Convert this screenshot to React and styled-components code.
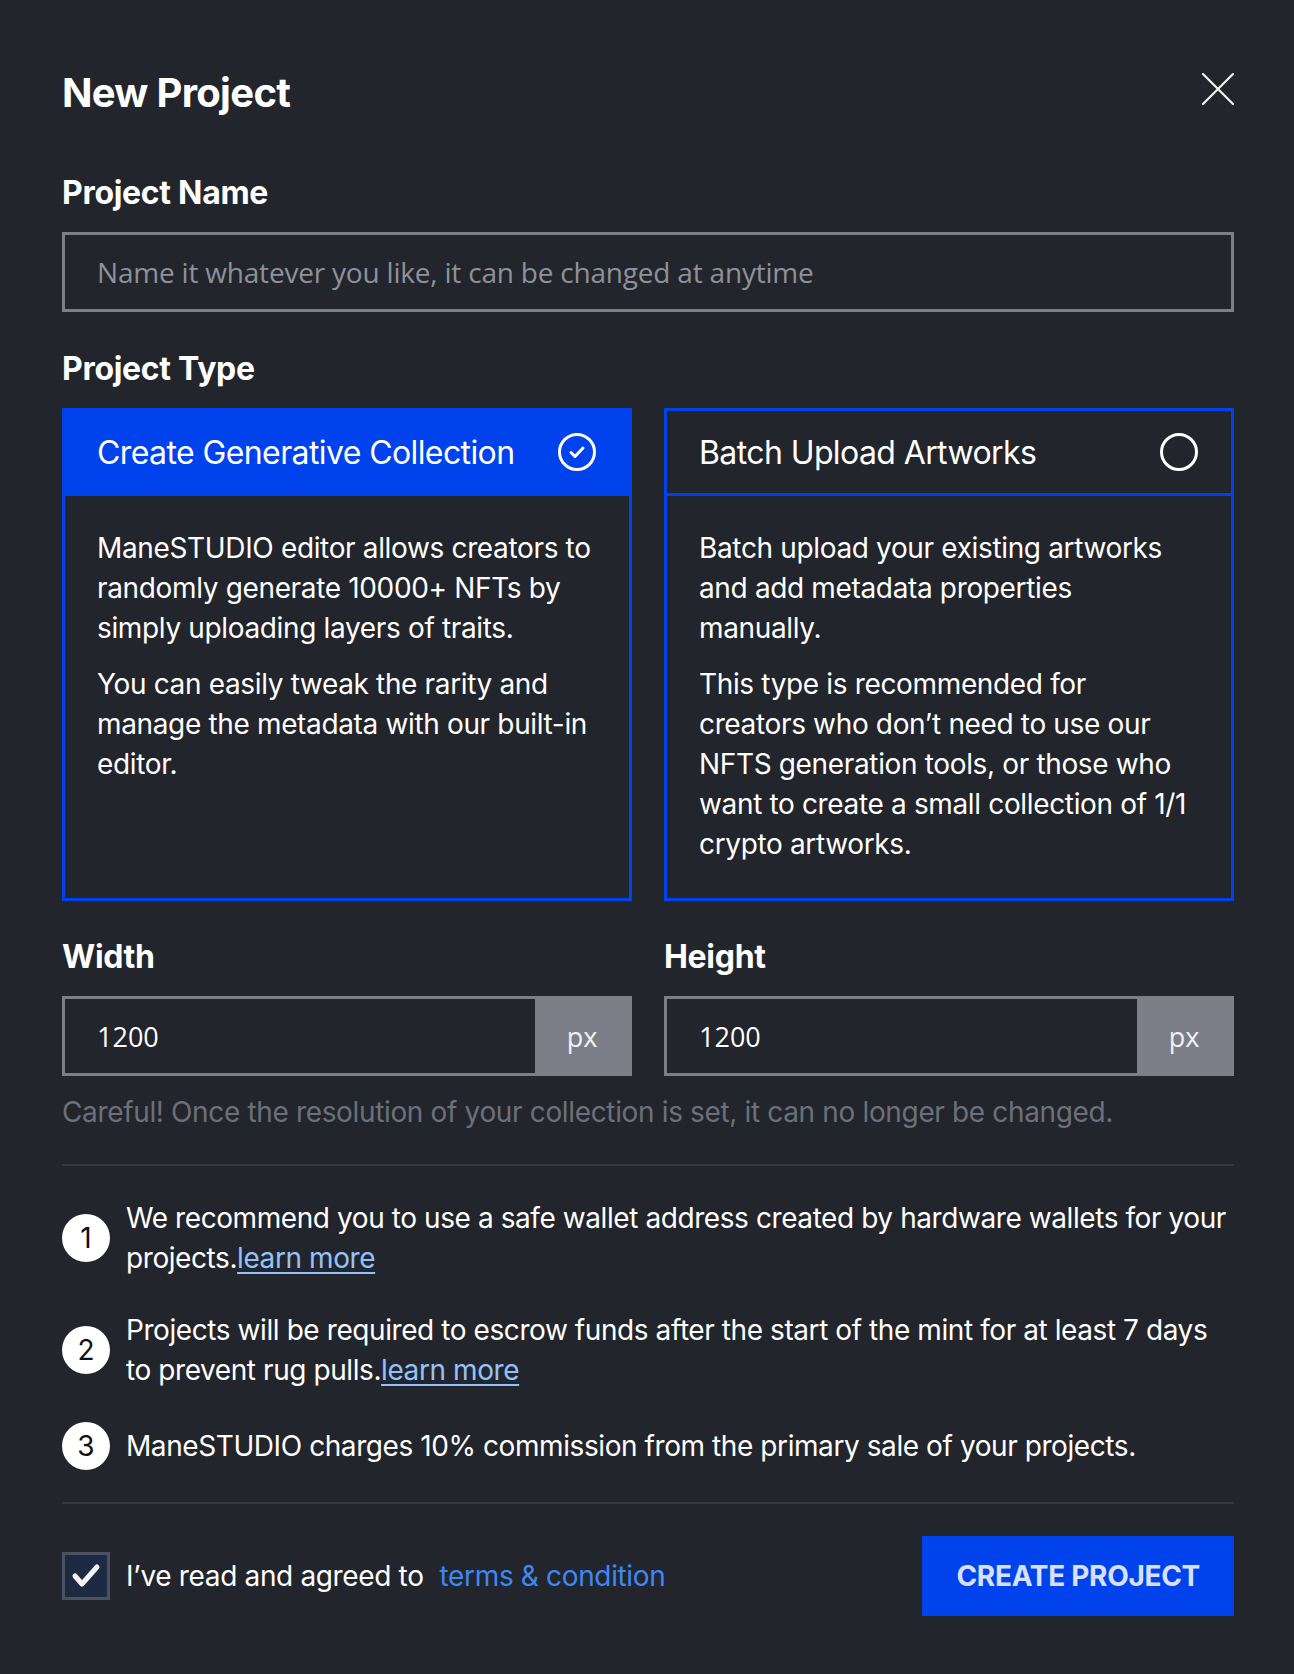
import React, { useState } from 'react'
import styled, { createGlobalStyle } from 'styled-components'

const GlobalStyle = createGlobalStyle`
  body {
    margin: 0;
    background: #22252b;
    font-family: Inter, "Liberation Sans", sans-serif;
    color: #fff;
  }
`

const projectTypes = [
  {
    id: 'generative',
    title: 'Create Generative Collection',
    paragraphs: [
      'ManeSTUDIO editor allows creators to randomly generate 10000+ NFTs by simply uploading layers of traits.',
      'You can easily tweak the rarity and manage the metadata with our built-in editor.'
    ]
  },
  {
    id: 'batch',
    title: 'Batch Upload Artworks',
    paragraphs: [
      'Batch upload your existing artworks and add metadata properties manually.',
      'This type is recommended for creators who don\u2019t need to use our NFTS generation tools, or those who want to create a small collection of 1/1 crypto artworks.'
    ]
  }
]

const notes = [
  { text: 'We recommend you to use a safe wallet address created by hardware wallets for your projects.', link: true },
  { text: 'Projects will be required to escrow funds after the start of the mint for at least 7 days to prevent rug pulls.', link: true },
  { text: 'ManeSTUDIO charges 10% commission from the primary sale of your projects.', link: false }
]

export default function App () {
  const [type, setType] = useState('generative')
  const [agreed, setAgreed] = useState(true)

  return (
    <>
      <GlobalStyle />
      <Modal>
        <Header>
          <Title>New Project</Title>
          <CloseButton aria-label='close'>
            <svg width='32' height='32' viewBox='0 0 32 32' stroke='#f2f2f2' strokeWidth='2.2' strokeLinecap='round'>
              <path d='M1 1L31 31M31 1L1 31' />
            </svg>
          </CloseButton>
        </Header>

        <Label>Project Name</Label>
        <TextInput placeholder='Name it whatever you like, it can be changed at anytime' />

        <Label $top={37}>Project Type</Label>
        <CardGrid>
          {projectTypes.map((t) => {
            const selected = t.id === type
            return (
              <Card key={t.id} onClick={() => setType(t.id)}>
                <CardHeader $selected={selected}>
                  <span>{t.title}</span>
                  <svg width='40' height='40' viewBox='0 0 40 40' fill='none' stroke='#fff' strokeWidth='3'>
                    <circle cx='20' cy='20' r='17.5' />
                    {selected && <path d='M14 20.5l4 4 8-8.5' strokeLinecap='round' strokeLinejoin='round' />}
                  </svg>
                </CardHeader>
                <CardBody>
                  {t.paragraphs.map((p) => <p key={p}>{p}</p>)}
                </CardBody>
              </Card>
            )
          })}
        </CardGrid>

        <SizeRow>
          {['Width', 'Height'].map((name) => (
            <div key={name}>
              <Label $top={36}>{name}</Label>
              <UnitInput>
                <input defaultValue='1200' />
                <span>px</span>
              </UnitInput>
            </div>
          ))}
        </SizeRow>
        <Hint>Careful! Once the resolution of your collection is set, it can no longer be changed.</Hint>

        <Divider />

        <Notes>
          {notes.map((n, i) => (
            <Note key={i}>
              <Num>{i + 1}</Num>
              <p>
                {n.text}
                {n.link && <a href='#'>learn more</a>}
              </p>
            </Note>
          ))}
        </Notes>

        <Divider />

        <Footer>
          <Agree>
            <CheckBox onClick={() => setAgreed(!agreed)}>
              {agreed && (
                <svg width='30' height='26' viewBox='0 0 30 26' fill='none' stroke='#f4f6fb' strokeWidth='5' strokeLinecap='round' strokeLinejoin='round'>
                  <path d='M4 13l7 8L26 4' />
                </svg>
              )}
            </CheckBox>
            <span>I’ve read and agreed to</span>
            <Terms href='#'>terms &amp; condition</Terms>
          </Agree>
          <CreateButton>CREATE PROJECT</CreateButton>
        </Footer>
      </Modal>
    </>
  )
}

const Modal = styled.div`
  box-sizing: border-box;
  width: 1294px;
  padding: 69px 60px 58px 62px;
`

const Header = styled.div`
  display: flex;
  justify-content: space-between;
  align-items: flex-start;
`

const Title = styled.h1`
  margin: 0;
  font-size: 40px;
  line-height: 48px;
  font-weight: 700;
  letter-spacing: -0.7px;
`

const CloseButton = styled.button`
  margin: 4px 0 0;
  padding: 0;
  width: 32px;
  height: 32px;
  background: none;
  border: 0;
  cursor: pointer;
  svg { display: block; }
`

const Label = styled.div`
  margin-top: ${p => p.$top || 56}px;
  margin-bottom: 19px;
  font-size: 32px;
  line-height: 40px;
  font-weight: 700;
  letter-spacing: -0.3px;
`

const TextInput = styled.input`
  display: block;
  box-sizing: border-box;
  width: 100%;
  height: 80px;
  padding: 0 32px;
  background: transparent;
  border: 3px solid #7c7f88;
  outline: none;
  color: #fff;
  font-family: "Open Sans", sans-serif;
  font-size: 28px;
  letter-spacing: -0.2px;
  &::placeholder { color: #8e919a; }
`

const CardGrid = styled.div`
  display: grid;
  grid-template-columns: 1fr 1fr;
  gap: 32px;
`

const Card = styled.div`
  display: flex;
  flex-direction: column;
  border: 3px solid #0043ec;
  cursor: pointer;
`

const CardHeader = styled.div`
  display: flex;
  align-items: center;
  justify-content: space-between;
  height: 82px;
  padding: 0 32px;
  background: ${p => (p.$selected ? '#0043ec' : 'transparent')};
  border-bottom: 3px solid #0043ec;
  font-size: 32px;
  letter-spacing: -0.6px;
  svg { display: block; flex: none; }
`

const CardBody = styled.div`
  padding: 32px 32px 34px;
  p {
    margin: 0 0 16px;
    font-size: 28px;
    line-height: 40px;
    letter-spacing: -0.35px;
  }
  p:last-child { margin-bottom: 0; }
`

const SizeRow = styled.div`
  display: grid;
  grid-template-columns: 1fr 1fr;
  gap: 32px;
`

const UnitInput = styled.div`
  display: flex;
  height: 80px;
  box-sizing: border-box;
  border: 3px solid #7c7f88;
  input {
    flex: 1;
    min-width: 0;
    padding: 0 32px;
    background: transparent;
    border: 0;
    outline: none;
    color: #fff;
    font-family: "Open Sans", sans-serif;
    font-size: 27px;
  }
  span {
    display: flex;
    align-items: center;
    justify-content: center;
    width: 94px;
    background: #7c7f88;
    color: #f0f0f4;
    font-family: "Open Sans", sans-serif;
    font-size: 27px;
  }
`

const Hint = styled.p`
  margin: 16px 0 0;
  font-size: 28px;
  line-height: 40px;
  color: #6c707a;
  letter-spacing: -0.35px;
`

const Divider = styled.hr`
  margin: 32px 0;
  border: 0;
  height: 2px;
  background: #35383f;
`

const Notes = styled.div`
  display: flex;
  flex-direction: column;
  gap: 32px;
`

const Note = styled.div`
  display: flex;
  align-items: center;
  gap: 16px;
  p {
    margin: 0;
    font-size: 28px;
    line-height: 40px;
    letter-spacing: -0.42px;
  }
  a {
    color: #92c3fa;
    text-decoration: underline;
    text-underline-offset: 4px;
  }
`

const Num = styled.div`
  flex: none;
  display: flex;
  align-items: center;
  justify-content: center;
  width: 48px;
  height: 48px;
  border-radius: 50%;
  background: #fff;
  color: #111;
  font-size: 28px;
`

const Footer = styled.div`
  display: flex;
  justify-content: space-between;
  align-items: center;
`

const Agree = styled.div`
  display: flex;
  align-items: center;
  font-size: 28px;
  letter-spacing: -0.35px;
  & > span { margin-left: 16px; }
`

const CheckBox = styled.div`
  display: flex;
  align-items: center;
  justify-content: center;
  box-sizing: border-box;
  width: 48px;
  height: 48px;
  background: #1e2a42;
  border: 3px solid #4a5163;
  cursor: pointer;
`

const Terms = styled.a`
  margin-left: 16px;
  color: #3e87f6;
  text-decoration: none;
`

const CreateButton = styled.button`
  height: 80px;
  padding: 0 34px;
  background: #0043ec;
  border: 0;
  color: #d9e0ff;
  font-family: Inter, sans-serif;
  font-size: 28px;
  font-weight: 700;
  letter-spacing: -0.3px;
  cursor: pointer;
`
